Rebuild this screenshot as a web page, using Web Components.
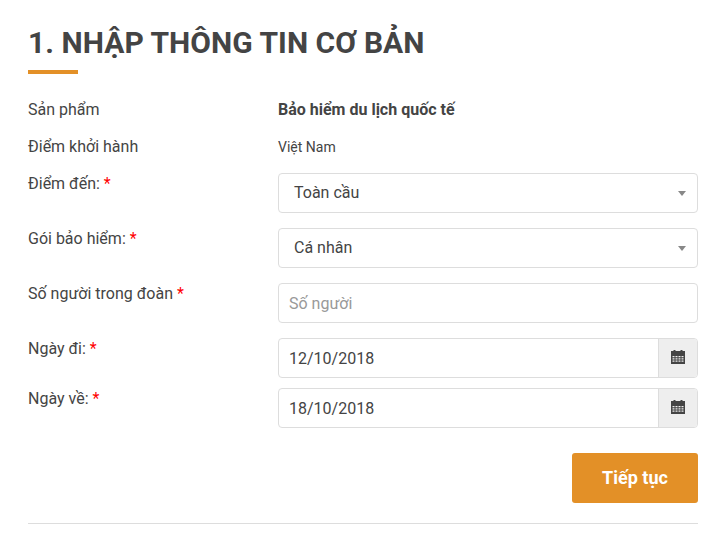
<!DOCTYPE html>
<html lang="vi">
<head>
<meta charset="utf-8">
<title>Nhập thông tin cơ bản</title>
<style>
html,body{margin:0;background:#fff}
body{font-family:Roboto,"Liberation Sans",sans-serif;color:#444;width:728px;height:554px;overflow:hidden}
</style>
</head>
<body>
<info-form>
  <form-heading slot="heading">1. NHẬP THÔNG TIN CƠ BẢN</form-heading>
  <form-row kind="info" top label="Sản phẩm"><strong-value>Bảo hiểm du lịch quốc tế</strong-value></form-row>
  <form-row kind="info" label="Điểm khởi hành"><plain-value>Việt Nam</plain-value></form-row>
  <form-row label="Điểm đến:" required after-info><select-box>Toàn cầu</select-box></form-row>
  <form-row label="Gói bảo hiểm:" required><select-box>Cá nhân</select-box></form-row>
  <form-row label="Số người trong đoàn" required><text-box placeholder>Số người</text-box></form-row>
  <form-row label="Ngày đi:" required><date-box>12/10/2018</date-box></form-row>
  <form-row label="Ngày về:" required tight><date-box>18/10/2018</date-box></form-row>
  <form-actions><primary-button>Tiếp tục</primary-button></form-actions>
</info-form>
<script>
function def(name, css, html){
  customElements.define(name, class extends HTMLElement{
    connectedCallback(){
      if(this.shadowRoot) return;
      const r=this.attachShadow({mode:'open'});
      r.innerHTML='<style>'+css+'</style>'+(typeof html==='function'?html(this):html);
    }
  });
}
def('info-form',
 ':host{display:block;padding:23px 30px 0 28px}.rows{display:flex;flex-direction:column}',
 '<slot name="heading"></slot><div class="rows"><slot></slot></div>');
def('form-heading',
 ':host{display:block;font-size:30px;font-weight:700;letter-spacing:.04px;line-height:40px;color:#444;height:40px}'+
 '.bar{width:50px;height:4px;background:#e39027;margin-top:7px}',
 '<slot></slot><div class="bar"></div>');
def('form-row',
 ':host{display:grid;grid-template-columns:250px 420px;margin-top:15px;font-size:16px;line-height:20px;color:#444}'+
 ':host([kind=info]){margin-top:0;height:37px;align-items:center}'+
 ':host([top]){margin-top:28px}'+
 ':host([after-info]){margin-top:8px}'+
 ':host([tight]){margin-top:10px}'+
 '.l{padding-top:1px}:host([kind=info]) .l{padding-top:0}.req{color:#f00}',
 el=>'<div class="l">'+el.getAttribute('label')+(el.hasAttribute('required')?' <span class="req">*</span>':'')+'</div><div><slot></slot></div>');
def('strong-value',':host{display:block;font-size:16px;font-weight:700;color:#444}','<slot></slot>');
def('plain-value',':host{display:block;font-size:14px;color:#444}','<slot></slot>');
const box='box-sizing:border-box;height:40px;border:1px solid #ddd;border-radius:4px;background:#fff;font-size:16px;line-height:38px;color:#444;';
def('select-box',
 ':host{display:flex;justify-content:space-between;align-items:center;'+box+'padding:0 11px 0 15px}'+
 '.a{width:0;height:0;border-left:4px solid transparent;border-right:4px solid transparent;border-top:5px solid #888;margin-top:1px}',
 '<span><slot></slot></span><span class="a"></span>');
def('text-box',
 ':host{display:block;'+box+'line-height:40px;padding:0 10px}:host([placeholder]){color:#999}',
 '<slot></slot>');
def('date-box',
 ':host{display:flex;'+box+'line-height:40px;overflow:hidden}'+
 '.v{flex:1;padding:0 10px}'+
 '.i{width:39px;background:#eee;border-left:1px solid #ddd;display:flex;align-items:center;justify-content:center;box-sizing:border-box}'+
 'svg{margin-bottom:2px}',
 '<div class="v"><slot></slot></div><div class="i"><svg width="14" height="14" viewBox="0 0 14 14" aria-hidden="true">'+
 '<path fill="#444" d="M0 1h2.500V0h2v1h5V0h2v1H14v4H0z"/>'+
 '<path fill="#444" fill-rule="evenodd" d="M0 5h14v9H0zM1.500 6v1.200h2V6zm3 0v1.200h2V6zm3 0v1.200h2V6zm3 0v1.200h2V6zM1.500 8.300v1.200h2V8.300zm3 0v1.200h2V8.300zm3 0v1.200h2V8.300zm3 0v1.200h2V8.300zM1.500 10.600v1.200h2v-1.200zm3 0v1.200h2v-1.200zm3 0v1.200h2v-1.200zm3 0v1.200h2v-1.200z"/>'+
 '</svg></div>');
def('form-actions',
 ':host{display:flex;justify-content:flex-end;margin-top:25px;padding-bottom:20px;border-bottom:1px solid #ddd}',
 '<slot></slot>');
def('primary-button',
 ':host{display:block;box-sizing:border-box;width:126px;height:50px;background:#e39027;border-radius:3px;color:#fff;font-size:18px;font-weight:700;line-height:50px;text-align:center}',
 '<slot></slot>');
</script>
</body>
</html>
